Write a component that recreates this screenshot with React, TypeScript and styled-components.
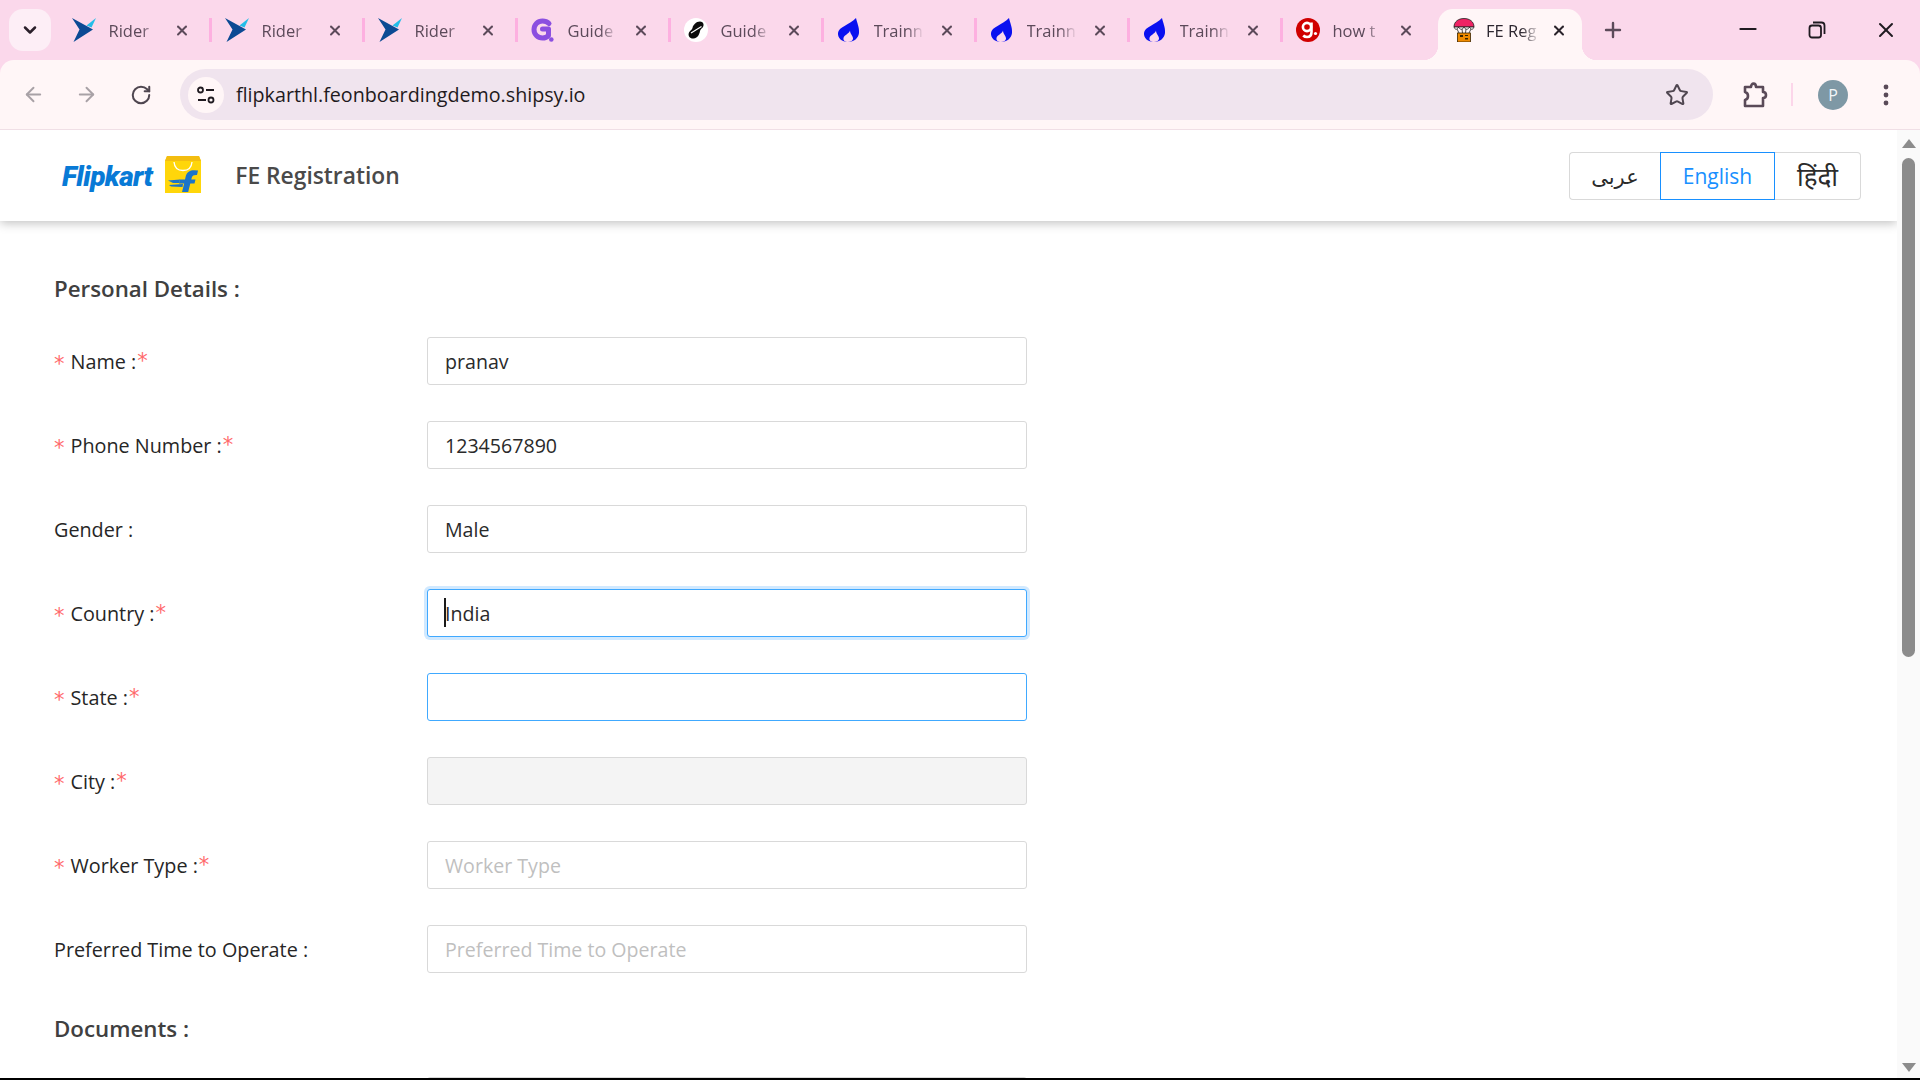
import React from "react";
import styled, { createGlobalStyle } from "styled-components";
import { ArrowLeft, ArrowRight, RotateCw, Star, X, Plus, ChevronDown, Minus } from "lucide-react";

const Global = createGlobalStyle`
  html, body { margin: 0; padding: 0; background: #fff; }
  #root { width: 1920px; height: 1080px; overflow: hidden; }
  * { box-sizing: border-box; }
`;

const FONT = `"Open Sans", "Noto Sans", "DejaVu Sans", sans-serif`;

const Win = styled.div`
  width: 1920px; height: 1080px; display: flex; flex-direction: column;
  background: #fbd8eb; font-family: ${FONT}; overflow: hidden;
`;
const TabStrip = styled.div`
  height: 60px; flex: none; display: flex; align-items: flex-start; position: relative;
`;
const TabMenu = styled.div`
  width: 42px; height: 42px; margin: 9px 7px 0 9px; flex: none; border-radius: 14px;
  background: #fdeef6; color: #2a1f2a; display: flex; align-items: center; justify-content: center;
`;
const Tab = styled.div`
  width: 151px; height: 60px; flex: none; display: flex; align-items: center; padding: 0 0 0 14px;
`;
const ActiveTab = styled.div`
  position: relative; width: 144px; height: 51px; margin: 9px 0 0 5px; flex: none; display: flex;
  align-items: center; padding: 0 0 9px 14px; background: #fff6f7; border-radius: 15px 15px 0 0;
  &::before, &::after {
    content: ""; position: absolute; bottom: 0; width: 15px; height: 15px;
  }
  &::before { left: -15px; background: radial-gradient(circle at 0 0, transparent 15px, #fff6f7 15.5px); }
  &::after { right: -15px; background: radial-gradient(circle at 100% 0, transparent 15px, #fff6f7 15.5px); }
`;
const Fav = styled.span<{ $gap?: number }>`
  width: 24px; height: 24px; flex: none; margin-right: ${(p) => p.$gap ?? 12.5}px; display: flex;
`;
const TabTitle = styled.span<{ $active?: boolean; $w?: number }>`
  width: ${(p) => p.$w ?? 50.5}px; flex: none; overflow: hidden; white-space: nowrap; font-size: 16.5px;
  padding-top: 2px; line-height: 22px;
  color: ${(p) => (p.$active ? "#2d2730" : "#5c4a5a")};
  -webkit-mask-image: linear-gradient(90deg, #000 65%, transparent 100%);
  mask-image: linear-gradient(90deg, #000 65%, transparent 100%);
`;
const TabClose = styled.span<{ $active?: boolean; $ml?: number }>`
  margin-left: ${(p) => p.$ml ?? 15}px; width: 16px; height: 16px; flex: none; display: flex;
  color: ${(p) => (p.$active ? "#2a232b" : "#5c4a5a")};
`;
const TabSep = styled.span`
  width: 2.5px; height: 24px; margin-top: 18px; flex: none; background: #fdb0e0; margin-right: -0.5px;
`;
const NewTab = styled.span`
  margin: 18px 0 0 19px; width: 24px; height: 24px; color: #5c4a5a; display: flex; flex: none;
`;
const WinControls = styled.div`
  margin-left: auto; display: flex; height: 60px; align-items: center; color: #1f1a20;
`;
const WinBtn = styled.span<{ $up?: number }>`
  width: 69px; display: flex; align-items: center; justify-content: center;
  margin-top: ${(p) => -(p.$up ?? 0)}px;
`;

const Toolbar = styled.div`
  height: 69px; flex: none; background: #fff6f7; border-radius: 14px 14px 0 0; display: flex;
  align-items: center; padding: 0 0 0 3px; position: relative;
`;
const NavBtn = styled.span<{ $dim?: boolean; $w?: number }>`
  width: ${(p) => p.$w ?? 54}px; flex: none; display: flex; justify-content: center;
  color: ${(p) => (p.$dim ? "#a8a1a6" : "#4f4650")};
`;
const Omni = styled.div`
  width: 1533px; height: 51px; margin-left: 8px; flex: none; background: #f0e4ee; border-radius: 26px;
  display: flex; align-items: center; padding: 0 24px 0 8px;
`;
const TuneChip = styled.span`
  width: 36px; height: 36px; border-radius: 50%; background: #fff6f7; display: flex;
  align-items: center; justify-content: center; flex: none; margin-right: 12px;
`;
const Url = styled.span`
  font-size: 19.7px; color: #1f1a20; flex: 1; white-space: nowrap;
`;
const ToolSep = styled.span`
  width: 2px; height: 23px; background: #fcd6ea; flex: none; margin: 0 25px 0 23px;
`;
const Avatar = styled.span`
  width: 30px; height: 30px; border-radius: 50%; background: #7e98a5; color: #f2f6f8; font-size: 16px;
  display: flex; align-items: center; justify-content: center; flex: none;
`;
const ToolIcon = styled.span<{ $ml?: number }>`
  display: flex; flex: none; color: #4f4650; margin-left: ${(p) => p.$ml ?? 0}px;
`;

const Main = styled.div`
  flex: 1; min-height: 0; display: flex; background: #fff; border-top: 1px solid #f0dfe6; overflow: hidden;
`;
const Page = styled.div`
  flex: 1; min-width: 0; display: flex; flex-direction: column; overflow: hidden;
`;
const Header = styled.header`
  height: 91px; flex: none; background: #fff; display: flex; align-items: center; padding: 0 36px 0 62px;
  box-shadow: 0 2px 10px rgba(0, 0, 0, 0.26); position: relative; z-index: 1;
`;
const BrandWord = styled.span`
  font-family: "Roboto", "Open Sans", sans-serif; font-style: italic; font-weight: 900; font-size: 28px;
  letter-spacing: -0.55px; color: #087ad6; margin-right: 12px; line-height: 1; position: relative; top: 1px;
`;
const BagBox = styled.span`
  display: flex; flex: none; margin-bottom: 2px;
`;
const PageTitle = styled.span`
  font-size: 22.8px; font-weight: 600; color: #4a4a4a; margin-left: 33px; white-space: nowrap;
`;
const LangGroup = styled.div`
  margin-left: auto; display: flex; height: 48px;
`;
const LangBtn = styled.span<{ $active?: boolean; $w: number; $pos: "l" | "m" | "r"; $size?: number }>`
  width: ${(p) => p.$w}px; height: 48px; display: flex; align-items: center; justify-content: center;
  font-size: ${(p) => p.$size ?? 21}px; font-weight: ${(p) => (p.$active ? 500 : 400)};
  color: ${(p) => (p.$active ? "#1890ff" : "#2b2b2b")};
  border: 1.5px solid ${(p) => (p.$active ? "#1890ff" : "#d9d9d9")};
  ${(p) => (p.$pos === "l" ? "border-radius: 4px 0 0 4px; border-right: none;" : "")}
  ${(p) => (p.$pos === "r" ? "border-radius: 0 4px 4px 0; border-left: none;" : "")}
`;
const Form = styled.div`
  padding: 48px 0 0 54px; display: flex; flex-direction: column;
`;
const SectionTitle = styled.h2<{ $mt?: number }>`
  margin: ${(p) => p.$mt ?? 0}px 0 0; font-size: 22.3px; font-weight: 600; color: #404040; line-height: 40px;
`;
const Row = styled.div`
  display: flex; align-items: center; height: 48px; margin-top: 36px; flex: none;
  &:first-of-type { margin-top: 28px; }
`;
const RowLabel = styled.label`
  width: 373px; flex: none; font-size: 19.8px; color: #262626; white-space: nowrap; display: flex; align-items: center;
  height: 30px;
`;
const Required = styled.span<{ $lead?: boolean }>`
  color: #ff6a6c; font-family: "DejaVu Sans", sans-serif; font-size: 21px; line-height: 30px;
  margin-right: ${(p) => (p.$lead ? 6 : 0)}px; margin-left: ${(p) => (p.$lead ? 0 : 1)}px;
  position: relative; top: ${(p) => (p.$lead ? 3 : 0)}px;
`;
const FieldWrap = styled.div`
  position: relative; width: 600px; height: 48px; flex: none;
`;
const Input = styled.input<{ $state?: "focus" | "hover" }>`
  width: 100%; height: 100%; padding: 0 17px; border-radius: 3px; outline: none; font: inherit;
  font-family: ${FONT}; font-size: 19.6px; color: #2a2a2a;
  border: 1.5px solid ${(p) => (p.$state ? "#40a9ff" : "#d9d9d9")};
  box-shadow: ${(p) => (p.$state === "focus" ? "0 0 0 3px rgba(24, 144, 255, 0.2)" : "none")};
  background: #fff;
  &:disabled { background: #f4f4f4; }
  &::placeholder { color: #bfbfbf; opacity: 1; }
`;
const Caret = styled.span`
  position: absolute; left: 17px; top: 9px; width: 2px; height: 29px; background: #1a1a1a;
`;
const Scrollbar = styled.div`
  width: 23px; flex: none; background: #fafafa; display: flex; flex-direction: column; align-items: center;
  padding: 9px 0 6px; position: relative; z-index: 2;
`;
const ArrowUp = styled.span`
  flex: none; width: 0; height: 0; border-left: 7px solid transparent; border-right: 7px solid transparent;
  border-bottom: 9px solid #8c8c8c;
`;
const ArrowDown = styled(ArrowUp)`
  border-bottom: none; border-top: 9px solid #8c8c8c; margin-top: auto;
`;
const Thumb = styled.span`
  flex: none; width: 13px; height: 499px; margin-top: 10px; background: #8c8c8c; border-radius: 7px;
`;
const BlackEdge = styled.div`
  height: 2px; flex: none; background: #000;
`;
const DocRow = styled(Row)`
  margin-top: 28px;
`;

const RiderIcon = () => (
  <svg width="24" height="24" viewBox="0 0 24 24">
    <path d="M0 0 L21 11.5 L1.5 24 L7.5 11.5 Z" fill="#0b4a94" />
    <path d="M14.5 7.5 L24 0 L19.5 9.5 Z" fill="#23bde8" />
  </svg>
);
const GuideGIcon = () => (
  <svg width="24" height="24" viewBox="0 0 24 24">
    <path d="M18 5.5 C16 3.5 14 3 11.5 3 C6.5 3 3 6.8 3 11.5 C3 16.2 6.5 20 11.5 20 C14 20 16 19.2 17.5 17.5 L17.5 11 L11.5 11"
      fill="none" stroke="#8b4fe0" strokeWidth="5" strokeLinecap="round" strokeLinejoin="round" />
    <circle cx="20.3" cy="21.5" r="2.3" fill="#8b4fe0" />
  </svg>
);
const GuideBIcon = () => (
  <svg width="24" height="24" viewBox="0 0 24 24">
    <circle cx="12" cy="12" r="12" fill="#fff" />
    <path d="M16 3.5 C19 3.5 20.5 6.5 19 9 C18 10.5 16.5 11 16 13 C15.5 16 14 20 9.5 20.5 C6 20.8 3.5 18 5 14.5 C6 12.5 8 12 8.5 10 C9 7 12 3.5 16 3.5 Z" fill="#0b0b0b" />
    <path d="M7 15 L17.5 8.5" stroke="#fff" strokeWidth="1.2" />
  </svg>
);
const FlameIcon = () => (
  <svg width="24" height="24" viewBox="0 0 24 24">
    <path d="M19 0 C20 5 22.5 9 22 15 C21.5 20 17 24 11 24 C5 24 0.5 20 1 15 C1.5 9 12 7 19 0 Z" fill="#0a10f0" />
    <path d="M13 12.5 C13 16 16.5 18 16 21 C15.5 23 13.5 24 11 24 C8 24 6 22.5 6.5 20 C7 17 12 16 13 12.5 Z" fill="#fbd8eb" />
  </svg>
);
const GoogleGIcon = () => (
  <svg width="24" height="24" viewBox="0 0 24 24">
    <circle cx="12" cy="12" r="12" fill="#d00000" />
    <circle cx="11" cy="9" r="4.1" fill="none" stroke="#fff" strokeWidth="2.6" />
    <path d="M15.5 4.5 V14 C15.5 17.5 13.5 19 11 19 C9.5 19 8.2 18.5 7.2 17.5" fill="none" stroke="#fff" strokeWidth="2.6" />
    <circle cx="19.5" cy="15.5" r="1.6" fill="#fff" />
  </svg>
);
const ChuteIcon = () => (
  <svg width="24" height="24" viewBox="0 0 24 24">
    <path d="M2 9 C2 3.5 6.5 0.5 12 0.5 C17.5 0.5 22 3.5 22 9 Z" fill="#ee2364" stroke="#222" strokeWidth="0.8" />
    <path d="M2 9 C3 12 5 12 6.5 9 C8 12 10.5 12 12 9 C13.5 12 16 12 17.5 9 C19 12 21 12 22 9 Z" fill="#fff" stroke="#222" strokeWidth="0.8" />
    <path d="M5 11 L7 15 M19 11 L17 15 M10 11 L10.5 15 M14 11 L13.5 15" stroke="#222" strokeWidth="0.8" />
    <rect x="5.5" y="15" width="13" height="9" fill="#ef8a00" stroke="#3a2400" strokeWidth="0.8" />
    <rect x="8" y="17" width="3" height="2" fill="#3a2400" />
    <rect x="13" y="17" width="3" height="1" fill="#3a2400" />
    <rect x="13" y="20" width="3" height="1.5" fill="#3a2400" />
  </svg>
);
const BagLogo = () => (
  <svg width="38" height="37" viewBox="0 0 38 37">
    <path d="M3 0 H35 L37 5 V37 H1 V5 Z" fill="#ffd60a" />
    <path d="M3 0 H35 L37 5 H1 Z" fill="#f3bd10" />
    <path d="M10 6 C10.5 12 14 14.5 19 14.5 C24 14.5 27.5 12 28 6" fill="none" stroke="#fff" strokeWidth="1.3" />
    <path d="M34 14.5 L33 19 C30 18.8 28.3 19.5 27.8 21.5 L27.3 23.5 H31.5 L30.5 27.5 H26.3 L24.2 36 H18 L20.2 27.5 H15 L15.8 23.5 H21 L21.8 20 C22.8 16 26 14.2 30 14.2 Z" fill="#1b74c9" />
    <path d="M4 24.5 L16 23.5 L15.2 27 L9 27 Z M5 29 L19 28 L18.5 31 L7 30.5 Z" fill="#1b74c9" />
  </svg>
);

const tabs: { icon: React.ReactNode; title: string }[] = [
  { icon: <RiderIcon />, title: "Rider" },
  { icon: <RiderIcon />, title: "Rider" },
  { icon: <RiderIcon />, title: "Rider" },
  { icon: <GuideGIcon />, title: "Guide" },
  { icon: <GuideBIcon />, title: "Guide" },
  { icon: <FlameIcon />, title: "Trainn" },
  { icon: <FlameIcon />, title: "Trainn" },
  { icon: <FlameIcon />, title: "Trainn" },
  { icon: <GoogleGIcon />, title: "how t" },
];

type FieldDef = {
  label: string; required?: boolean; value?: string; placeholder?: string;
  state?: "focus" | "hover"; disabled?: boolean; caret?: boolean;
};
const fields: FieldDef[] = [
  { label: "Name :", required: true, value: "pranav" },
  { label: "Phone Number :", required: true, value: "1234567890" },
  { label: "Gender :", value: "Male" },
  { label: "Country :", required: true, value: "India", state: "focus", caret: true },
  { label: "State :", required: true, value: "", state: "hover" },
  { label: "City :", required: true, value: "", disabled: true },
  { label: "Worker Type :", required: true, placeholder: "Worker Type" },
  { label: "Preferred Time to Operate :", placeholder: "Preferred Time to Operate" },
];

const FieldRow = ({ f }: { f: FieldDef }) => (
  <Row>
    <RowLabel>
      {f.required && <Required $lead>*</Required>}
      {f.label}
      {f.required && <Required>*</Required>}
    </RowLabel>
    <FieldWrap>
      <Input readOnly value={f.value} placeholder={f.placeholder} disabled={f.disabled} $state={f.state} />
      {f.caret && <Caret />}
    </FieldWrap>
  </Row>
);

export default function App() {
  return (
    <Win>
      <Global />
      <TabStrip>
        <TabMenu><ChevronDown size={20} strokeWidth={3} /></TabMenu>
        {tabs.map((t, i) => (
          <React.Fragment key={i}>
            <Tab>
              <Fav>{t.icon}</Fav>
              <TabTitle>{t.title}</TabTitle>
              <TabClose><X size={17} strokeWidth={3} /></TabClose>
            </Tab>
            {i < 8 && <TabSep />}
          </React.Fragment>
        ))}
        <ActiveTab>
          <Fav $gap={10}><ChuteIcon /></Fav>
          <TabTitle $active $w={54}>FE Reg</TabTitle>
          <TabClose $active $ml={11}><X size={17} strokeWidth={3} /></TabClose>
        </ActiveTab>
        <NewTab><Plus size={24} strokeWidth={2.4} /></NewTab>
        <WinControls>
          <WinBtn $up={2}><Minus size={26} strokeWidth={2} /></WinBtn>
          <WinBtn>
            <svg width="18" height="18" viewBox="0 0 18 18" fill="none" stroke="currentColor" strokeWidth="1.8">
              <rect x="1.5" y="4.5" width="11.5" height="12" rx="2.5" />
              <path d="M5 1.5 H13.5 C15.2 1.5 16.5 2.8 16.5 4.5 V13" />
            </svg>
          </WinBtn>
          <WinBtn><X size={24} strokeWidth={2} /></WinBtn>
        </WinControls>
      </TabStrip>
      <Toolbar>
        <NavBtn $dim $w={60}><ArrowLeft size={23} strokeWidth={2} /></NavBtn>
        <NavBtn $dim $w={47}><ArrowRight size={23} strokeWidth={2} /></NavBtn>
        <NavBtn $w={62}><RotateCw size={22} strokeWidth={2.2} /></NavBtn>
        <Omni>
          <TuneChip>
            <svg width="20" height="20" viewBox="0 0 20 20" fill="none" stroke="#1f1a20" strokeWidth="1.8">
              <circle cx="4.5" cy="5" r="2.5" />
              <path d="M10 5 H18 M2 15 H10" />
              <circle cx="15" cy="15" r="2.5" />
            </svg>
          </TuneChip>
          <Url>flipkarthl.feonboardingdemo.shipsy.io</Url>
          <Star size={24} strokeWidth={2} color="#4f4650" />
        </Omni>
        <ToolIcon $ml={29}>
          <svg width="26" height="28" viewBox="0 0 26 28" fill="none" stroke="#5a4a58" strokeWidth="2.6" strokeLinejoin="round">
            <path d="M3 6 H9 C9 1.5 14 1.5 14 6 H21 V11 C25 11 25 17 21 17 V25 H3 V19 C7 18 7 12 3 11 Z" />
          </svg>
        </ToolIcon>
        <ToolSep />
        <Avatar>P</Avatar>
        <ToolIcon $ml={24}>
          <svg width="28" height="28" viewBox="0 0 28 28" fill="#5a4a58">
            <circle cx="14" cy="6" r="2.4" /><circle cx="14" cy="14" r="2.4" /><circle cx="14" cy="22" r="2.4" />
          </svg>
        </ToolIcon>
      </Toolbar>
      <Main>
        <Page>
          <Header>
            <BrandWord>Flipkart</BrandWord>
            <BagBox><BagLogo /></BagBox>
            <PageTitle>FE Registration</PageTitle>
            <LangGroup>
              <LangBtn $w={91} $pos="l" dir="rtl">عربى</LangBtn>
              <LangBtn $w={115} $pos="m" $active>English</LangBtn>
              <LangBtn $w={86} $pos="r" $size={26}>हिंदी</LangBtn>
            </LangGroup>
          </Header>
          <Form>
            <SectionTitle>Personal Details :</SectionTitle>
            {fields.map((f) => <FieldRow key={f.label} f={f} />)}
            <SectionTitle $mt={36}>Documents :</SectionTitle>
            <DocRow>
              <RowLabel />
              <FieldWrap><Input readOnly placeholder="" /></FieldWrap>
            </DocRow>
          </Form>
        </Page>
        <Scrollbar>
          <ArrowUp />
          <Thumb />
          <ArrowDown />
        </Scrollbar>
      </Main>
      <BlackEdge />
    </Win>
  );
}
